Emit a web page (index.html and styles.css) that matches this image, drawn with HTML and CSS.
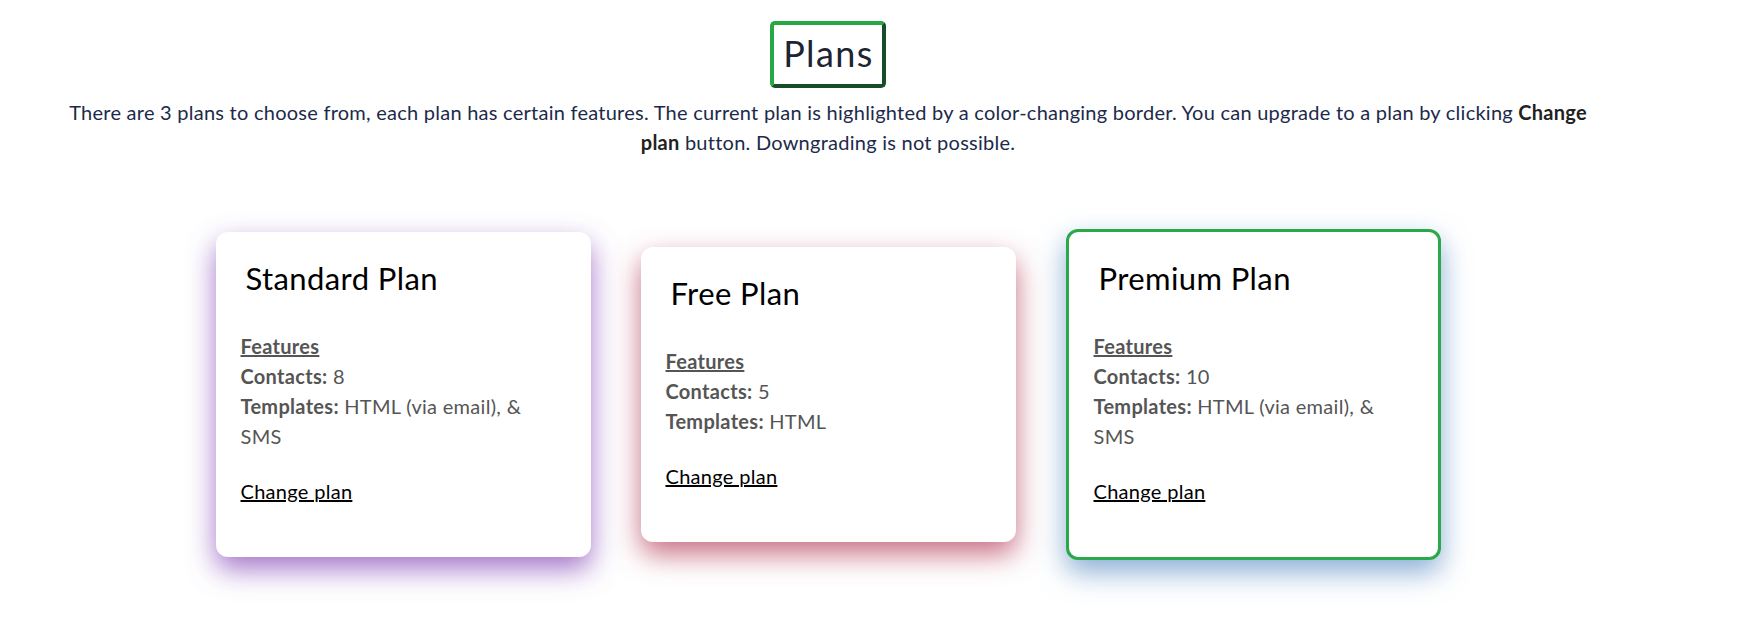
FILE: index.html
```html
<!DOCTYPE html>
<html lang="en">
<head>
<meta charset="utf-8">
<title>Plans</title>
<link rel="stylesheet" href="styles.css">
</head>
<body>
<main class="page">
  <header class="intro">
    <h1 class="title">Plans</h1>
    <p class="lead">There are 3 plans to choose from, each plan has certain features. The current plan is highlighted by a color-changing border. You can upgrade to a plan by clicking <strong>Change plan</strong> button. Downgrading is not possible.</p>
  </header>
  <section class="plans">
    <article class="card card-standard">
      <h2 class="card-title">Standard Plan</h2>
      <div class="features">
        <div class="features-head">Features</div>
        <div class="row"><b>Contacts:</b> 8</div>
        <div class="row"><b>Templates:</b> HTML (via email), &amp; SMS</div>
      </div>
      <a class="change" href="#">Change plan</a>
    </article>
    <article class="card card-free">
      <h2 class="card-title">Free Plan</h2>
      <div class="features">
        <div class="features-head">Features</div>
        <div class="row"><b>Contacts:</b> 5</div>
        <div class="row"><b>Templates:</b> HTML</div>
      </div>
      <a class="change" href="#">Change plan</a>
    </article>
    <article class="card card-premium">
      <h2 class="card-title">Premium Plan</h2>
      <div class="features">
        <div class="features-head">Features</div>
        <div class="row"><b>Contacts:</b> 10</div>
        <div class="row"><b>Templates:</b> HTML (via email), &amp; SMS</div>
      </div>
      <a class="change" href="#">Change plan</a>
    </article>
  </section>
</main>
</body>
</html>
```

FILE: styles.css
```css
* { box-sizing: border-box; }

html, body {
  margin: 0;
  padding: 0;
  background: #ffffff;
}

body {
  font-family: Lato, "Noto Sans", "Liberation Sans", sans-serif;
  color: #212529;
  min-height: 630px;
}

.page {
  width: 1656px;
  padding-top: 21px;
  padding-bottom: 70px;
}

.intro {
  display: flex;
  flex-direction: column;
  align-items: center;
}

.title {
  margin: 0;
  display: inline-block;
  font-size: 36px;
  font-weight: 400;
  letter-spacing: 1.4px;
  line-height: 56px;
  padding: 0 8px 3px 9px;
  border: 4px solid;
  border-color: #28a745 #174d27 #174d27 #28a745;
  border-radius: 5px;
  color: #1d2433;
}

.lead {
  margin: 9px 0 0;
  width: 1545px;
  text-align: center;
  font-size: 20px;
  letter-spacing: 0.25px;
  line-height: 30px;
  color: #1c2a4a;
}

.lead strong {
  color: #222;
}

.plans {
  display: flex;
  justify-content: center;
  align-items: center;
  gap: 50px;
  margin-top: 72px;
}

.card {
  width: 375px;
  padding: 25px;
  background: #fff;
  border-radius: 12px;
  color: #555;
  font-size: 20px;
  letter-spacing: 0.3px;
  line-height: 30px;
}

.card-standard {
  box-shadow: 0 12px 28px rgba(125, 60, 180, 0.7);
}

.card-free {
  box-shadow: 0 12px 28px rgba(175, 50, 80, 0.7);
}

.card-premium {
  border: 3px solid #2ba84a;
  box-shadow: 0 12px 28px rgba(60, 120, 185, 0.6);
}

.card-title {
  margin: 3px 0 35px;
  padding-left: 5px;
  font-size: 31px;
  letter-spacing: 0.4px;
  line-height: 36px;
  font-weight: 400;
  color: #000;
}

.features {
  max-width: 300px;
}

.features-head {
  font-weight: 700;
  text-decoration: underline;
}

.row b {
  font-weight: 700;
}

.change {
  display: block;
  margin: 25px 0 26px;
  color: #000;
  text-decoration: underline;
  width: max-content;
}
```
